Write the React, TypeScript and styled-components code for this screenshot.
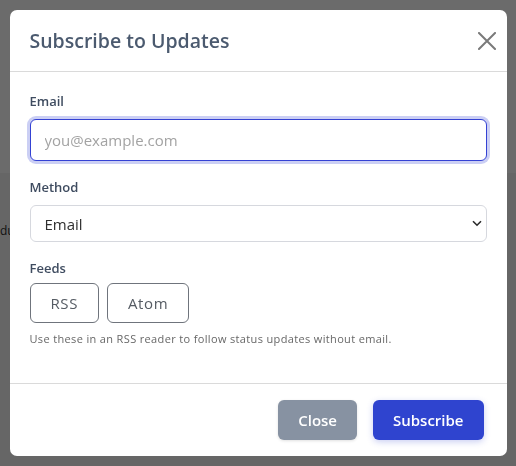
import styled, { createGlobalStyle } from "styled-components"

const GlobalStyle = createGlobalStyle`
	html, body {
		margin: 0;
		padding: 0;
		width: 516px;
		height: 466px;
		overflow: hidden;
		font-family: "Open Sans", "Noto Sans", "Liberation Sans", sans-serif;
	}
	* {
		box-sizing: border-box;
	}
`

const CloseIcon = () => (
	<svg width="18" height="18" viewBox="0 0 18 18" fill="none">
		<path d="M1 1L17 17M17 1L1 17" stroke="#7a7a7a" strokeWidth="2" strokeLinecap="square" />
	</svg>
)

const Chevron = () => (
	<svg width="10" height="7" viewBox="0 0 10 7" fill="none">
		<path d="M1 1.2L5 5.2L9 1.2" stroke="#2b2b2b" strokeWidth="1.6" />
	</svg>
)

export default function App() {
	return (
		<>
			<GlobalStyle />
			<Page>
				<PageHeader />
				<PageBody>
					<PageText>du</PageText>
				</PageBody>
			</Page>
			<Overlay>
				<Modal>
					<Header>
						<Title>Subscribe to Updates</Title>
						<IconButton aria-label="Close">
							<CloseIcon />
						</IconButton>
					</Header>
					<Body>
						<Field>
							<Label>Email</Label>
							<Input placeholder="you@example.com" />
						</Field>
						<Field>
							<Label>Method</Label>
							<SelectWrap>
								<Select defaultValue="email">
									<option value="email">Email</option>
									<option value="sms">SMS</option>
								</Select>
								<SelectArrow>
									<Chevron />
								</SelectArrow>
							</SelectWrap>
						</Field>
						<Field>
							<Label>Feeds</Label>
							<FeedRow>
								<FeedButton>RSS</FeedButton>
								<FeedButton>Atom</FeedButton>
							</FeedRow>
							<Help>Use these in an RSS reader to follow status updates without email.</Help>
						</Field>
					</Body>
					<Footer>
						<Button variant="secondary">Close</Button>
						<Button variant="primary">Subscribe</Button>
					</Footer>
				</Modal>
			</Overlay>
		</>
	)
}

const Page = styled.div`
	width: 516px;
	height: 466px;
	background: #f2f2f2;
`

const PageHeader = styled.div`
	height: 173px;
	background: #ffffff;
`

const PageBody = styled.div`
	padding-top: 49px;
`

const PageText = styled.p`
	margin: 0;
	font-size: 12px;
	color: #2e2e2e;
`

const Overlay = styled.div`
	position: fixed;
	inset: 0;
	background: rgba(0, 0, 0, 0.58);
	display: flex;
	align-items: center;
	justify-content: center;
`

const Modal = styled.div`
	width: 497px;
	background: #ffffff;
	border-radius: 7px;
	display: flex;
	flex-direction: column;
	overflow: hidden;
`

const Header = styled.div`
	display: flex;
	align-items: center;
	justify-content: space-between;
	padding: 16px 11px 15px 20px;
	border-bottom: 1px solid #dadada;
`

const Title = styled.h2`
	margin: 0;
	font-size: 19.5px;
	line-height: 30px;
	font-weight: 600;
	color: #4b5a6f;
`

const IconButton = styled.button`
	border: 0;
	background: none;
	padding: 0;
	width: 18px;
	height: 18px;
	display: flex;
	cursor: pointer;
`

const Body = styled.div`
	display: flex;
	flex-direction: column;
	gap: 16px;
	padding: 19px 20px 37px;
	border-bottom: 1px solid #dadada;
`

const Field = styled.div`
	display: flex;
	flex-direction: column;
`

const Label = styled.label`
	font-size: 13px;
	line-height: 20px;
	font-weight: 600;
	color: #3f4c60;
	margin-bottom: 8px;
`

const Input = styled.input`
	height: 42px;
	border: 1px solid #3442d3;
	border-radius: 6px;
	box-shadow: 0 0 0 3px #cbcff4;
	padding: 0 14px;
	font-family: inherit;
	font-size: 15px;
	color: #333;
	outline: none;
	&::placeholder {
		color: #a3a3a3;
	}
`

const SelectWrap = styled.div`
	position: relative;
`

const Select = styled.select`
	width: 100%;
	height: 37px;
	appearance: none;
	border: 1px solid #d6d8de;
	border-radius: 6px;
	background: #fff;
	padding: 0 14px;
	font-family: inherit;
	font-size: 15px;
	color: #2f2f2f;
`

const SelectArrow = styled.span`
	position: absolute;
	right: 5px;
	top: 15px;
	display: flex;
	pointer-events: none;
`

const FeedRow = styled.div`
	display: flex;
	gap: 8px;
	margin-top: -3px;
`

const FeedButton = styled.button`
	height: 40px;
	padding: 0 20px;
	border: 1px solid #6f747c;
	border-radius: 6px;
	background: #fff;
	font-family: inherit;
	font-size: 15px;
	font-weight: 500;
	letter-spacing: 0.6px;
	color: #555b63;
`

const Help = styled.div`
	margin-top: 8px;
	font-size: 11px;
	line-height: 15px;
	letter-spacing: 0.35px;
	color: #676767;
`

const Footer = styled.div`
	display: flex;
	justify-content: flex-end;
	gap: 16px;
	padding: 16px 23px 16px 20px;
`

const Button = styled.button<{ variant: "primary" | "secondary" }>`
	height: 40px;
	padding: 0 20px;
	border: 0;
	border-radius: 6px;
	font-family: inherit;
	font-size: 15px;
	font-weight: 600;
	color: #fff;
	background: ${(p) => (p.variant === "primary" ? "#2f44cf" : "#8792a2")};
	box-shadow: ${(p) =>
		p.variant === "primary" ? "0 2px 6px rgba(47, 68, 207, 0.25)" : "0 1px 3px rgba(0, 0, 0, 0.12)"};
`
